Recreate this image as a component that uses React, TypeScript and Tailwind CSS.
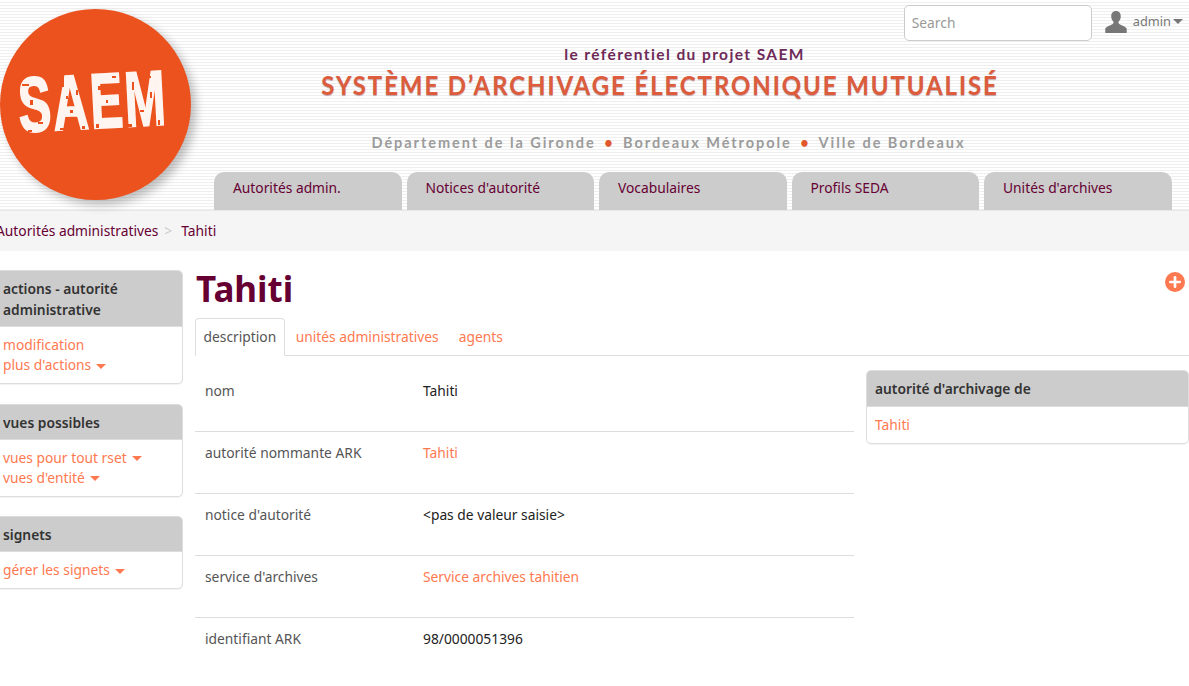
import { Plus } from 'lucide-react'

const tabs = ['Autorités admin.', "Notices d'autorité", 'Vocabulaires', 'Profils SEDA', "Unités d'archives"]

const rows = [
  { label: 'nom', value: 'Tahiti' },
  { label: 'autorité nommante ARK', value: 'Tahiti', link: true },
  { label: "notice d'autorité", value: '<pas de valeur saisie>' },
  { label: "service d'archives", value: 'Service archives tahitien', link: true },
  { label: 'identifiant ARK', value: '98/0000051396' },
]

// worn patches over the logo letters
const specks = [
  [22, 84, 7, 2], [30, 100, 3, 5], [38, 122, 5, 2], [28, 130, 4, 2], [45, 92, 2, 6], [24, 112, 5, 2],
  [62, 78, 2, 9], [70, 110, 3, 3], [60, 128, 5, 2], [76, 90, 2, 5], [66, 96, 2, 3], [82, 126, 3, 3],
  [98, 86, 3, 4], [104, 112, 5, 2], [96, 124, 3, 4], [112, 76, 4, 2], [106, 100, 2, 3],
  [132, 82, 2, 8], [140, 110, 4, 2], [150, 92, 2, 6], [128, 124, 4, 3], [158, 120, 2, 5], [146, 76, 5, 2],
]

function Caret() {
  return <span className="ml-[5px] inline-block align-middle border-x-[5px] border-t-[5px] border-x-transparent border-t-[#ff7950]" />
}

function SideCard({ title, children }: { title: React.ReactNode; children: React.ReactNode }) {
  return (
    <div className="w-[193px] rounded-[5px] border border-[#ddd] bg-white shadow-[0_1px_1px_rgba(0,0,0,0.05)] overflow-hidden">
      <div className="bg-[#ccc] border-b border-[#ddd] pl-[12px] pr-3 pt-[7px] pb-[6px] font-semibold text-[13.800px] leading-[21px] text-[#333]">{title}</div>
      <div className="pl-[12px] py-[8px] leading-[20px] text-[#ff7950]">{children}</div>
    </div>
  )
}

export default function App() {
  return (
    <div className="w-[1189px] h-[686px] overflow-hidden bg-white font-['Noto_Sans',sans-serif] text-[13.800px] text-[#333]">
      <header className="relative h-[211px] flex border-b border-[#e7e7e7] bg-[repeating-linear-gradient(to_bottom,#ffffff_0px,#ffffff_2px,#efefef_2px,#efefef_3px)]">
        <div className="w-[214px] shrink-0 pt-[9px]">
          <div className="relative w-[191px] h-[191px] rounded-full bg-[#ec521e] shadow-[5px_5px_10px_rgba(0,0,0,0.25)] flex items-center justify-center">
            <span className="-mt-[5px] -ml-[5px] -rotate-[3deg] scale-x-[0.66] scale-y-[1.05] font-['Liberation_Sans',sans-serif] font-bold text-[74px] leading-none tracking-[3px] text-[#fff5f0] [-webkit-text-stroke:2px_#fff5f0]">SAEM</span>
            <svg viewBox="0 0 191 191" className="absolute left-0 top-[-9px] w-[191px] h-[191px] fill-[#ec521e]">
              {specks.map(([x, y, w, h]) => (
                <rect key={`${x}-${y}`} x={x} y={y} width={w} height={h} />
              ))}
            </svg>
          </div>
        </div>
        <div className="flex-1 flex flex-col min-w-0">
          <div className="h-[47px] flex items-start justify-end pt-[5px] pr-[6px]">
            <div className="w-[188px] h-[36px] rounded-[5px] border border-[#ccc] bg-white pl-[7px] flex items-center text-[#999]">Search</div>
            <svg viewBox="0 0 24 24" className="ml-[12px] mt-[5px] w-[24px] h-[23px] fill-[#777]">
              <path d="M12 1c-3.3 0-5 2.4-5 5.4 0 2.3.8 4.4 2.2 5.6.4 1 .2 2-.6 2.6C6.400 16 2 17 .8 19.500V24h22.400v-4.500C22 17 17.600 16 15.400 14.600c-.8-.6-1-1.600-.6-2.600C16.200 10.800 17 8.700 17 6.400 17 3.400 15.300 1 12 1z" />
            </svg>
            <span className="ml-[5px] mt-[5px] text-[12.800px] leading-[22px] text-[#777]">admin</span>
            <span className="ml-[2px] mt-[14px] border-x-[5px] border-t-[5px] border-x-transparent border-t-[#777]" />
          </div>
          <div className="ml-[109px] w-[674px] h-[125px] flex flex-col items-center font-['Lato',sans-serif]">
            <div className="ml-[49px] -mt-[1px] h-[28px] whitespace-nowrap font-bold text-[15.500px] leading-[16px] tracking-[1.400px] text-[#6e2a58]">le référentiel du projet SAEM</div>
            <div className="h-[61px] whitespace-nowrap scale-y-[1.12] font-bold text-[24px] leading-[26px] tracking-[1.900px] text-[#dc5c3c] [text-shadow:0_1px_1px_rgba(110,40,60,0.4)]">SYSTÈME D’ARCHIVAGE ÉLECTRONIQUE MUTUALISÉ</div>
            <div className="ml-[17px] whitespace-nowrap font-bold text-[14.500px] leading-[16px] tracking-[1.950px] text-[#9b9b9b]">
              Département de la Gironde <span className="mx-[3px] text-[#e2572b]">•</span> Bordeaux Métropole <span className="mx-[3px] text-[#e2572b]">•</span> Ville de Bordeaux
            </div>
          </div>
          <nav className="flex gap-[5px]">
            {tabs.map((t) => (
              <div key={t} className="w-[187.500px] h-[38px] rounded-t-[10px] bg-[#ccc] pl-[19px] pt-[6px] leading-[20px] text-[#660033]">{t}</div>
            ))}
          </nav>
        </div>
      </header>

      <div className="h-[40px] bg-[#f5f5f5] -ml-[4px] flex items-center leading-[20px] text-[#660033] whitespace-nowrap">
        Autorités administratives<span className="mx-[6px] text-[#ccc]">&gt;</span><span className="ml-[3px]">Tahiti</span>
      </div>

      <div className="flex pt-[19px]">
        <aside className="-ml-[10px] w-[205px] shrink-0 flex flex-col gap-[19.500px]">
          <SideCard title={<>actions - autorité<br />administrative</>}>
            <div>modification</div>
            <div>plus d'actions<Caret /></div>
          </SideCard>
          <SideCard title="vues possibles">
            <div>vues pour tout rset<Caret /></div>
            <div>vues d'entité<Caret /></div>
          </SideCard>
          <SideCard title="signets">
            <div>gérer les signets<Caret /></div>
          </SideCard>
        </aside>

        <main className="flex-1 min-w-0">
          <div className="flex items-start justify-between h-[48px]">
            <h1 className="ml-[1px] font-bold text-[35px] leading-[38px] text-[#660033]">Tahiti</h1>
            <span className="mt-[2px] mr-[4px] w-[20px] h-[20px] rounded-full bg-[#ff7950] flex items-center justify-center">
              <Plus className="w-[16px] h-[16px] text-white" strokeWidth={4} />
            </span>
          </div>
          <div className="flex h-[38px] border-b border-[#ddd] items-start">
            <div className="h-[38px] px-[7.500px] pt-[8px] leading-[20px] rounded-t-[4px] border border-[#ddd] border-b-white bg-white text-[#555]">description</div>
            <div className="ml-[11px] pt-[9px] leading-[20px] text-[#ff7950]">unités administratives</div>
            <div className="ml-[20px] pt-[9px] leading-[20px] text-[#ff7950]">agents</div>
          </div>
          <div className="flex pt-[14px] gap-[12px]">
            <div className="w-[659px] shrink-0">
              {rows.map((r, i) => (
                <div key={r.label} className={`flex h-[62px] pt-[10.500px] leading-[20px] ${i < rows.length - 1 ? 'border-b border-[#ddd]' : ''}`}>
                  <div className="w-[228px] pl-[10px] text-[#555]">{r.label}</div>
                  <div className={r.link ? 'text-[#ff7950]' : 'text-[#222]'}>{r.value}</div>
                </div>
              ))}
            </div>
            <div className="flex-1 h-[74px] rounded-[5px] border border-[#ddd] shadow-[0_1px_1px_rgba(0,0,0,0.05)] overflow-hidden">
              <div className="h-[36px] bg-[#ccc] border-b border-[#ddd] pl-[8px] pt-[1px] flex items-center font-semibold text-[13.800px] text-[#333]">autorité d'archivage de</div>
              <div className="pl-[8px] pt-[8px] leading-[20px] text-[#ff7950]">Tahiti</div>
            </div>
          </div>
        </main>
      </div>
    </div>
  )
}
